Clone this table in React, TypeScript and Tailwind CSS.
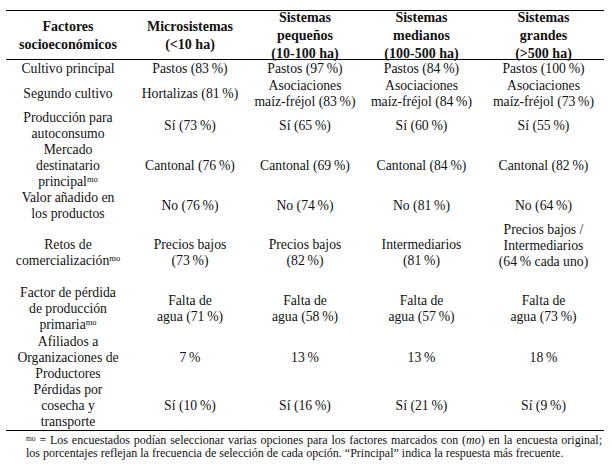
import type { ReactNode } from 'react';

const Mo = () => <span className="relative -top-[4px] text-[8.5px] leading-none">mo</span>;

type Row = {
  h: string;
  cells: ReactNode[][];
  top?: number[]; // column indexes aligned to top
};

const pct = (n: string) => `${n}\u2009%`;

const rows: Row[] = [
  {
    h: 'h-[18px]',
    cells: [['Cultivo principal'], [`Pastos (${pct('83')})`], [`Pastos (${pct('97')})`], [`Pastos (${pct('84')})`], [`Pastos (${pct('100')})`]],
  },
  {
    h: 'h-[32px]',
    cells: [
      ['Segundo cultivo'],
      [`Hortalizas (${pct('81')})`],
      ['Asociaciones', `maíz-fréjol (${pct('83')})`],
      ['Asociaciones', `maíz-fréjol (${pct('84')})`],
      ['Asociaciones', `maíz-fréjol (${pct('73')})`],
    ],
  },
  {
    h: 'h-[32px]',
    cells: [['Producción para', 'autoconsumo'], [`Sí (${pct('73')})`], [`Sí (${pct('65')})`], [`Sí (${pct('60')})`], [`Sí (${pct('55')})`]],
  },
  {
    h: 'h-[48px]',
    cells: [
      ['Mercado', 'destinatario', <>principal<Mo /></>],
      [`Cantonal (${pct('76')})`],
      [`Cantonal (${pct('69')})`],
      [`Cantonal (${pct('84')})`],
      [`Cantonal (${pct('82')})`],
    ],
  },
  {
    h: 'h-[32px]',
    cells: [['Valor añadido en', 'los productos'], [`No (${pct('76')})`], [`No (${pct('74')})`], [`No (${pct('81')})`], [`No (${pct('64')})`]],
  },
  {
    h: 'h-[62px]',
    top: [4],
    cells: [
      ['Retos de', <>comercialización<Mo /></>],
      ['Precios bajos', `(${pct('73')})`],
      ['Precios bajos', `(${pct('82')})`],
      ['Intermediarios', `(${pct('81')})`],
      ['Precios bajos /', 'Intermediarios', `(${pct('64')} cada uno)`],
    ],
  },
  {
    h: 'h-[50px]',
    cells: [
      ['Factor de pérdida', 'de producción', <>primaria<Mo /></>],
      ['Falta de', `agua (${pct('71')})`],
      ['Falta de', `agua (${pct('58')})`],
      ['Falta de', `agua (${pct('57')})`],
      ['Falta de', `agua (${pct('73')})`],
    ],
  },
  {
    h: 'h-[48px]',
    cells: [['Afiliados a', 'Organizaciones de', 'Productores'], [pct('7')], [pct('13')], [pct('13')], [pct('18')]],
  },
  {
    h: 'h-[48px]',
    cells: [['Pérdidas por', 'cosecha y', 'transporte'], [`Sí (${pct('10')})`], [`Sí (${pct('16')})`], [`Sí (${pct('21')})`], [`Sí (${pct('9')})`]],
  },
];

const header: string[][] = [
  ['Factores', 'socioeconómicos'],
  ['Microsistemas', '(<10 ha)'],
  ['Sistemas', 'pequeños', '(10-100 ha)'],
  ['Sistemas', 'medianos', '(100-500 ha)'],
  ['Sistemas', 'grandes', '(>500 ha)'],
];

const cols = 'grid grid-cols-[124px_120px_110px_123px_121px]';

export default function App() {
  return (
    <div className="w-[612px] h-[469px] bg-white text-[#111] pt-[10px] pl-[6px] font-['Liberation_Serif','Times_New_Roman',serif]">
      <div className="w-[598px]">
        {/* header */}
        <div className={`${cols} h-[50px] border-t-[1.5px] border-b border-black`}>
          {header.map((lines, i) => (
            <div key={i} className="flex flex-col items-center justify-center text-center font-bold text-[14px] leading-[18px] -mt-[2px]">
              {lines.map((l, j) => (
                <div key={j}>{l}</div>
              ))}
            </div>
          ))}
        </div>

        {/* body */}
        {rows.map((row, r) => (
          <div key={r} className={`${cols} ${row.h}`}>
            {row.cells.map((lines, c) => (
              <div
                key={c}
                className={`flex flex-col items-center text-center text-[13.7px] leading-[16px] whitespace-nowrap ${
                  row.top?.includes(c) ? 'justify-start' : 'justify-center'
                }`}
              >
                {lines.map((l, j) => (
                  <div key={j}>{l}</div>
                ))}
              </div>
            ))}
          </div>
        ))}

        {/* footnote */}
        <div className="border-t-[1.5px] border-black pt-[3px] pl-[20px] text-[12px] leading-[13px]">
          <div className="[text-align-last:justify] pr-[2px]">
            <span className="relative -top-[3px] text-[7.5px] leading-none">mo</span> = Los encuestados podían seleccionar varias opciones para los factores marcados con (<i>mo</i>) en la encuesta original;
          </div>
          <div>los porcentajes reflejan la frecuencia de selección de cada opción. “Principal” indica la respuesta más frecuente.</div>
        </div>
      </div>
    </div>
  );
}
